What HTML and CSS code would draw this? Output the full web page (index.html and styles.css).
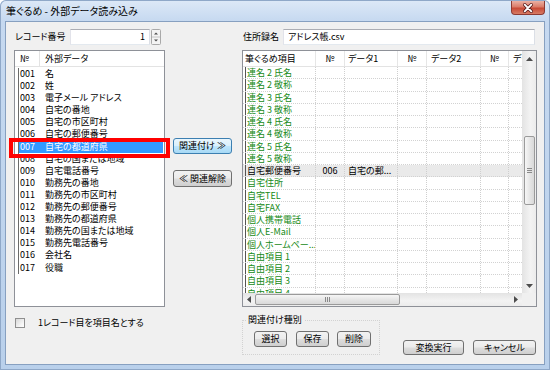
FILE: index.html
```html
<!DOCTYPE html>
<html lang="ja">
<head>
<meta charset="utf-8">
<title>筆ぐるめ - 外部データ読み込み</title>
<link rel="stylesheet" href="styles.css">
</head>
<body>
<div class="window">
  <div class="titlebar">
    <span class="title">筆ぐるめ - 外部データ読み込み</span>
    <span class="close">
      <svg width="34" height="14" viewBox="0 0 34 14"><path d="M13.5 3.5 L20.5 10.5 M20.5 3.5 L13.5 10.5" stroke="#5a2020" stroke-width="3.6" stroke-linecap="round"/><path d="M13.5 3.5 L20.5 10.5 M20.5 3.5 L13.5 10.5" stroke="#ffffff" stroke-width="2" stroke-linecap="round"/></svg>
    </span>
  </div>
  <div class="client">
    <div class="col-left">
      <div class="field-row">
        <span class="rec-lbl">レコード番号</span>
        <span class="input num-input">1</span>
        <span class="spin">
          <svg width="10" height="16" viewBox="0 0 10 16"><rect x="0.5" y="0.5" width="9" height="15" rx="1" fill="#f3f3f3" stroke="#a9a9a9"/><line x1="1" y1="8" x2="9" y2="8" stroke="#c4c4c4"/><path d="M3 5.5 L5 3.5 L7 5.5 Z" fill="#4a4a4a"/><path d="M3 10.5 L5 12.5 L7 10.5 Z" fill="#4a4a4a"/></svg>
        </span>
      </div>
      <div class="listbox">
        <div class="lhead"><span class="lh-no">№</span><span class="lh-name">外部データ</span></div>
        <div class="lrows">
          <div class="lrow"><span class="lno">001</span><span>名</span></div>
          <div class="lrow"><span class="lno">002</span><span>姓</span></div>
          <div class="lrow"><span class="lno">003</span><span>電子メール アドレス</span></div>
          <div class="lrow"><span class="lno">004</span><span>自宅の番地</span></div>
          <div class="lrow"><span class="lno">005</span><span>自宅の市区町村</span></div>
          <div class="lrow"><span class="lno">006</span><span>自宅の郵便番号</span></div>
          <div class="lrow sel"><span class="lno">007</span><span>自宅の都道府県</span></div>
          <div class="lrow"><span class="lno">008</span><span>自宅の国または地域</span></div>
          <div class="lrow"><span class="lno">009</span><span>自宅電話番号</span></div>
          <div class="lrow"><span class="lno">010</span><span>勤務先の番地</span></div>
          <div class="lrow"><span class="lno">011</span><span>勤務先の市区町村</span></div>
          <div class="lrow"><span class="lno">012</span><span>勤務先の郵便番号</span></div>
          <div class="lrow"><span class="lno">013</span><span>勤務先の都道府県</span></div>
          <div class="lrow"><span class="lno">014</span><span>勤務先の国または地域</span></div>
          <div class="lrow"><span class="lno">015</span><span>勤務先電話番号</span></div>
          <div class="lrow"><span class="lno">016</span><span>会社名</span></div>
          <div class="lrow"><span class="lno">017</span><span>役職</span></div>
        </div>
        <div class="annot"></div>
      </div>
      <div class="chk-row"><span class="chk"></span><span class="chk-lbl">1レコード目を項目名とする</span></div>
    </div>

    <div class="col-mid">
      <button class="btn btn-hot mid-btn">関連付け ≫</button>
      <button class="btn mid-btn mid-btn2">≪ 関連解除</button>
    </div>

    <div class="col-right">
      <div class="field-row">
        <span class="addr-lbl">住所録名</span>
        <span class="input addr-input">アドレス帳.csv</span>
      </div>
      <div class="grid">
        <div class="gdata">
          <div class="ghead">
            <span class="c c1">筆ぐるめ項目</span>
            <span class="c c2 ctr">№</span>
            <span class="c c3">データ1</span>
            <span class="c c4 ctr">№</span>
            <span class="c c5">データ2</span>
            <span class="c c6 ctr">№</span>
            <span class="c c7">データ3</span>
          </div>
          <div class="grow"><span class="c c1 g"><i>連名 2 氏名</i></span><span class="c c2"></span><span class="c c3"></span><span class="c c4"></span><span class="c c5"></span><span class="c c6"></span><span class="c c7"></span></div>
          <div class="grow"><span class="c c1 g"><i>連名 2 敬称</i></span><span class="c c2"></span><span class="c c3"></span><span class="c c4"></span><span class="c c5"></span><span class="c c6"></span><span class="c c7"></span></div>
          <div class="grow"><span class="c c1 g"><i>連名 3 氏名</i></span><span class="c c2"></span><span class="c c3"></span><span class="c c4"></span><span class="c c5"></span><span class="c c6"></span><span class="c c7"></span></div>
          <div class="grow"><span class="c c1 g"><i>連名 3 敬称</i></span><span class="c c2"></span><span class="c c3"></span><span class="c c4"></span><span class="c c5"></span><span class="c c6"></span><span class="c c7"></span></div>
          <div class="grow"><span class="c c1 g"><i>連名 4 氏名</i></span><span class="c c2"></span><span class="c c3"></span><span class="c c4"></span><span class="c c5"></span><span class="c c6"></span><span class="c c7"></span></div>
          <div class="grow"><span class="c c1 g"><i>連名 4 敬称</i></span><span class="c c2"></span><span class="c c3"></span><span class="c c4"></span><span class="c c5"></span><span class="c c6"></span><span class="c c7"></span></div>
          <div class="grow"><span class="c c1 g"><i>連名 5 氏名</i></span><span class="c c2"></span><span class="c c3"></span><span class="c c4"></span><span class="c c5"></span><span class="c c6"></span><span class="c c7"></span></div>
          <div class="grow"><span class="c c1 g"><i>連名 5 敬称</i></span><span class="c c2"></span><span class="c c3"></span><span class="c c4"></span><span class="c c5"></span><span class="c c6"></span><span class="c c7"></span></div>
          <div class="grow gsel"><span class="c c1"><i>自宅郵便番号</i></span><span class="c c2 ctr">006</span><span class="c c3">自宅の郵...</span><span class="c c4"></span><span class="c c5"></span><span class="c c6"></span><span class="c c7"></span></div>
          <div class="grow"><span class="c c1 g"><i>自宅住所</i></span><span class="c c2"></span><span class="c c3"></span><span class="c c4"></span><span class="c c5"></span><span class="c c6"></span><span class="c c7"></span></div>
          <div class="grow"><span class="c c1 g"><i>自宅TEL</i></span><span class="c c2"></span><span class="c c3"></span><span class="c c4"></span><span class="c c5"></span><span class="c c6"></span><span class="c c7"></span></div>
          <div class="grow"><span class="c c1 g"><i>自宅FAX</i></span><span class="c c2"></span><span class="c c3"></span><span class="c c4"></span><span class="c c5"></span><span class="c c6"></span><span class="c c7"></span></div>
          <div class="grow"><span class="c c1 g"><i>個人携帯電話</i></span><span class="c c2"></span><span class="c c3"></span><span class="c c4"></span><span class="c c5"></span><span class="c c6"></span><span class="c c7"></span></div>
          <div class="grow"><span class="c c1 g"><i>個人E-Mail</i></span><span class="c c2"></span><span class="c c3"></span><span class="c c4"></span><span class="c c5"></span><span class="c c6"></span><span class="c c7"></span></div>
          <div class="grow"><span class="c c1 g"><i>個人ホームペー...</i></span><span class="c c2"></span><span class="c c3"></span><span class="c c4"></span><span class="c c5"></span><span class="c c6"></span><span class="c c7"></span></div>
          <div class="grow"><span class="c c1 g"><i>自由項目 1</i></span><span class="c c2"></span><span class="c c3"></span><span class="c c4"></span><span class="c c5"></span><span class="c c6"></span><span class="c c7"></span></div>
          <div class="grow"><span class="c c1 g"><i>自由項目 2</i></span><span class="c c2"></span><span class="c c3"></span><span class="c c4"></span><span class="c c5"></span><span class="c c6"></span><span class="c c7"></span></div>
          <div class="grow"><span class="c c1 g"><i>自由項目 3</i></span><span class="c c2"></span><span class="c c3"></span><span class="c c4"></span><span class="c c5"></span><span class="c c6"></span><span class="c c7"></span></div>
          <div class="grow"><span class="c c1 g"><i>自由項目 4</i></span><span class="c c2"></span><span class="c c3"></span><span class="c c4"></span><span class="c c5"></span><span class="c c6"></span><span class="c c7"></span></div>
        </div>
        <div class="vscroll">
          <span class="sarrow sa-up"><svg width="7" height="4" viewBox="0 0 7 4"><path d="M0 4 L3.5 0 L7 4 Z" fill="#4d4d4d"/></svg></span>
          <span class="vthumb"><svg width="5" height="5" viewBox="0 0 5 5"><path d="M0 0.5 H5 M0 2.5 H5 M0 4.5 H5" stroke="#8a8a8a" stroke-width="1"/></svg></span>
          <span class="sarrow sa-down"><svg width="7" height="4" viewBox="0 0 7 4"><path d="M0 0 L3.5 4 L7 0 Z" fill="#4d4d4d"/></svg></span>
        </div>
        <div class="hscroll">
          <span class="sarrow sa-left"><svg width="4" height="7" viewBox="0 0 4 7"><path d="M4 0 L0 3.5 L4 7 Z" fill="#4d4d4d"/></svg></span>
          <span class="hthumb"><svg width="5" height="5" viewBox="0 0 5 5"><path d="M0.5 0 V5 M2.5 0 V5 M4.5 0 V5" stroke="#8a8a8a" stroke-width="1"/></svg></span>
          <span class="sarrow sa-right"><svg width="4" height="7" viewBox="0 0 4 7"><path d="M0 0 L4 3.5 L0 7 Z" fill="#4d4d4d"/></svg></span>
        </div>
        <div class="corner"></div>
      </div>
      <div class="bottom-row">
        <div class="group">
          <div class="group-label">関連付け種別</div>
          <div class="group-btns">
            <button class="btn gbtn">選択</button>
            <button class="btn gbtn">保存</button>
            <button class="btn gbtn gbtn-w">削除</button>
          </div>
        </div>
        <div class="actions">
          <button class="btn act act1">変換実行</button>
          <button class="btn act act2">キャンセル</button>
        </div>
      </div>
    </div>
  </div>
</div>
</body>
</html>
```
FILE: styles.css
```css
* { box-sizing: border-box; }

body {
  margin: 0;
  background: #ffffff;
  font-family: "Noto Sans CJK JP", "Noto Sans", sans-serif;
  font-size: 9px;
  color: #000;
  font-feature-settings: "palt";
}

.window {
  width: 550px;
  height: 370px;
  display: flex;
  flex-direction: column;
  border-radius: 6px 6px 0 0;
  background: linear-gradient(180deg, #dde9f7 0, #c6d9f0 21px, #b9d0eb 100%);
  box-shadow: inset 0 0 0 1px #8fa8c8;
  overflow: hidden;
}

.titlebar {
  height: 21px;
  display: flex;
  align-items: flex-start;
}

.title {
  font-size: 10px;
  line-height: 12px;
  margin: 5px 0 0 6px;
  color: #000;
}

.close {
  margin: 1px 5px 0 auto;
  width: 34px;
  height: 14px;
  border: 1px solid #8d3a32;
  border-top: none;
  border-radius: 0 0 4px 4px;
  background: linear-gradient(180deg, #eab1a4 0%, #db7c69 45%, #c84a36 55%, #d77b64 100%);
  display: flex;
}

.client {
  flex: 1;
  margin: 0 5px 5px;
  border: 1px solid #87a0c0;
  background: #f0f0f0;
  display: flex;
  padding: 7px 0 0 8px;
}

/* ---------- left ---------- */
.col-left {
  width: 151px;
  display: flex;
  flex-direction: column;
}

.field-row {
  height: 16px;
  display: flex;
  align-items: center;
}

.rec-lbl {
  width: 56px;
  padding-left: 1px;
  line-height: 12px;
}

.input {
  height: 16px;
  background: #fff;
  border: 1px solid;
  border-color: #abadb3 #dbdfe6 #e3e9ef #e2e3ea;
  line-height: 14px;
  white-space: nowrap;
}

.num-input {
  width: 80px;
  text-align: right;
  padding-right: 4px;
}

.spin {
  width: 10px;
  height: 16px;
  margin-left: 1px;
  display: flex;
}

.listbox {
  margin-top: 5px;
  height: 257px;
  border: 1px solid #8e9198;
  background: #fff;
  position: relative;
}

.lhead {
  height: 16px;
  display: flex;
  border-bottom: 1px solid #e3e3e3;
  line-height: 15px;
}

.lh-no {
  width: 25px;
  padding-left: 5px;
  border-right: 1px solid #e3e3e3;
}

.lh-name { padding-left: 5px; }

.lrows { padding-top: 1px; }

.lrow {
  display: flex;
  height: 12.1px;
  line-height: 12px;
  margin: 0 1px 0 3px;
  border-left: 1px solid #6a6a6a;
  white-space: nowrap;
}

.lno {
  width: 26px;
  padding-left: 1px;
}

.lrow.sel {
  background: #3399ff;
  color: #fff;
}

.annot {
  position: absolute;
  left: -6px;
  top: 87px;
  width: 161px;
  height: 20px;
  border: 4px solid #ff0000;
}

.chk-row {
  margin-top: 11px;
  height: 10px;
  display: flex;
  align-items: center;
}

.chk {
  width: 10px;
  height: 10px;
  margin-left: 1px;
  border: 1px solid #8f8f8f;
  background: linear-gradient(135deg, #d8d8d8, #f6f6f6 70%, #ffffff);
}

.chk-lbl {
  margin-left: 13px;
  line-height: 12px;
  white-space: nowrap;
}

/* ---------- buttons ---------- */
.btn {
  font: inherit;
  font-size: 9px;
  color: #000;
  height: 16px;
  padding: 0;
  margin: 0;
  border: 1px solid #707070;
  border-radius: 3px;
  background: linear-gradient(180deg, #f2f2f2 0%, #ebebeb 48%, #dddddd 52%, #cfcfcf 100%);
  display: flex;
  align-items: center;
  justify-content: center;
  line-height: 12px;
  white-space: nowrap;
}

.btn-hot {
  border-color: #3c7fb1;
  background: linear-gradient(180deg, #eaf6fd 0%, #d9f0fc 48%, #bee6fd 52%, #a7d9f5 100%);
}

/* ---------- middle ---------- */
.col-mid {
  width: 77px;
  display: flex;
  flex-direction: column;
  align-items: flex-start;
  padding: 109px 0 0 8px;
}

.mid-btn { width: 59px; }
.mid-btn2 { margin-top: 16px; height: 17px; }

/* ---------- right ---------- */
.col-right {
  width: 295px;
  display: flex;
  flex-direction: column;
}

.addr-lbl {
  width: 41px;
  padding-left: 1px;
  line-height: 12px;
}

.addr-input {
  width: 252px;
  padding-left: 4px;
}

.grid {
  margin-top: 5px;
  height: 257px;
  border: 1px solid #8e9198;
  background: #fff;
  display: grid;
  grid-template-columns: 1fr 14px;
  grid-template-rows: 1fr 13px;
}

.gdata {
  overflow: hidden;
  min-width: 0;
}

.ghead {
  display: flex;
  height: 16px;
  border-bottom: 1px solid #e3e3e3;
  line-height: 15px;
}

.c {
  flex: none;
  overflow: hidden;
  white-space: nowrap;
  border-right: 1px dotted #cfcfcf;
  padding-left: 3px;
}

.ghead .c { border-right: 1px solid #e6e6e6; }

.c1 { width: 73px; }
.c2 { width: 29px; }
.c3 { width: 53px; }
.c4 { width: 29px; }
.c5 { width: 54px; }
.c6 { width: 28px; }
.c7 { width: 40px; }

.ghead .c1 { padding-left: 2px; }
.ghead .c5 { padding-left: 4px; }
.ghead .c7 { padding-left: 4px; }

.ctr { text-align: center; padding-left: 0; }
.ghead .ctr { padding-left: 0; }

.grow {
  display: flex;
  height: 12.25px;
  line-height: 11px;
  border-bottom: 1px dotted #d2d2d2;
}

.grow .c1 { padding-left: 2px; }

.grow .c1 i {
  font-style: normal;
  display: block;
  height: 100%;
  border-left: 1px solid #555;
  padding-left: 1px;
}

.g { color: #178a17; }

.grow.gsel { background: #eaeaea; }

/* scrollbars */
.vscroll {
  display: flex;
  flex-direction: column;
  align-items: center;
  background: linear-gradient(90deg, #e3e3e3, #f3f3f3 60%, #ececec);
}

.sarrow {
  display: flex;
  align-items: center;
  justify-content: center;
  flex: none;
}

.sa-up { height: 15px; width: 100%; }
.sa-down { height: 14px; width: 100%; margin-top: auto; }

.vthumb {
  margin-top: 70px;
  width: 11px;
  height: 69px;
  border: 1px solid #9a9a9a;
  border-radius: 2px;
  background: linear-gradient(90deg, #f6f6f6, #e6e6e6 50%, #d9d9d9);
  display: flex;
  align-items: center;
  justify-content: center;
}

.hscroll {
  display: flex;
  align-items: center;
  background: linear-gradient(180deg, #e3e3e3, #f3f3f3 60%, #ececec);
}

.sa-left { width: 12px; height: 100%; }
.sa-right { width: 13px; height: 100%; margin-left: auto; }

.hthumb {
  width: 145px;
  height: 11px;
  border: 1px solid #9a9a9a;
  border-radius: 2px;
  background: linear-gradient(180deg, #f6f6f6, #e6e6e6 50%, #d9d9d9);
  display: flex;
  align-items: center;
  justify-content: center;
}

.corner { background: #f0f0f0; }

/* bottom */
.bottom-row {
  display: flex;
  align-items: flex-start;
}

.group {
  width: 138px;
  height: 35px;
  margin-top: 13px;
  border: 1px dotted #d2d2d2;
}

.group-label {
  margin: -7px 0 0 3px;
  padding: 0 2px;
  width: fit-content;
  background: #f0f0f0;
  line-height: 12px;
}

.group-btns {
  display: flex;
  margin-top: 5px;
  padding-left: 11px;
  gap: 9px;
}

.gbtn { width: 33px; }
.gbtn-w { width: 34px; margin-left: -1px; }

.actions {
  margin: 33px 1px 0 auto;
  display: flex;
  gap: 9px;
}

.act { height: 15px; }
.act1 { width: 61px; }
.act2 { width: 63px; }
```
